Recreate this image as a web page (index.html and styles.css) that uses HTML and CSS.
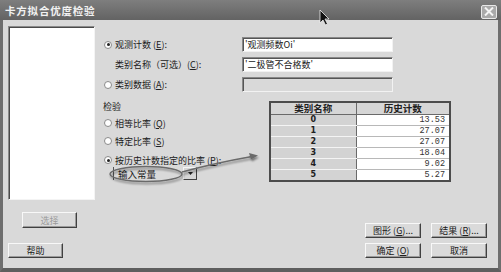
FILE: index.html
```html
<!DOCTYPE html>
<html lang="zh">
<head>
<meta charset="utf-8">
<title>卡方拟合优度检验</title>
<link rel="stylesheet" href="styles.css">
</head>
<body>
<div class="window">
  <div class="titlebar">
    <span class="title">卡方拟合优度检验</span>
    <span class="close"><svg width="10" height="9" viewBox="0 0 10 9"><path d="M1 0.5 L9 8.5 M9 0.5 L1 8.5" stroke="#f4f4f4" stroke-width="2"/></svg></span>
  </div>
  <div class="body">
    <div class="left">
      <div class="listbox"></div>
      <button class="btn btn-select" disabled>选择</button>
    </div>
    <div class="form">
      <div class="row">
        <div class="field-label"><span class="radio checked"></span>观测计数 (<u>E</u>):</div>
        <div class="input">'观测频数Oi'</div>
      </div>
      <div class="row">
        <div class="field-label indent">类别名称（可选）(<u>C</u>):</div>
        <div class="input">'二极管不合格数'</div>
      </div>
      <div class="row">
        <div class="field-label"><span class="radio"></span>类别数据 (<u>A</u>):</div>
        <div class="input disabled"></div>
      </div>
      <div class="test-section">
        <div class="test-left">
          <div class="group-title">检验</div>
          <div class="opt opt1"><span class="radio"></span>相等比率 (<u>Q</u>)</div>
          <div class="opt opt2"><span class="radio"></span>特定比率 (<u>S</u>)</div>
          <div class="opt opt3"><span class="radio checked"></span>按历史计数指定的比率 (<u>P</u>):</div>
          <div class="combo">
            <span class="combo-text">输入常量</span>
            <span class="combo-btn"><svg width="5" height="3" viewBox="0 0 5 3"><path d="M0 0 H5 L2.5 3 Z" fill="#222"/></svg></span>
          </div>
        </div>
        <table class="grid">
          <colgroup><col class="c1"><col class="c2"></colgroup>
          <thead>
            <tr><th>类别名称</th><th>历史计数</th></tr>
          </thead>
          <tbody>
            <tr><td class="cat">0</td><td class="num">13.53</td></tr>
            <tr><td class="cat">1</td><td class="num">27.07</td></tr>
            <tr><td class="cat">2</td><td class="num">27.07</td></tr>
            <tr><td class="cat">3</td><td class="num">18.04</td></tr>
            <tr><td class="cat">4</td><td class="num">9.02</td></tr>
            <tr><td class="cat">5</td><td class="num">5.27</td></tr>
          </tbody>
        </table>
      </div>
      <div class="btn-row">
        <button class="btn">图形 (<u>G</u>)...</button>
        <button class="btn">结果 (<u>R</u>)...</button>
      </div>
    </div>
  </div>
  <div class="footer">
    <button class="btn">帮助</button>
    <div class="footer-right">
      <button class="btn">确定 (<u>O</u>)</button>
      <button class="btn">取消</button>
    </div>
  </div>
  <svg class="overlay" width="501" height="272" viewBox="0 0 501 272">
    <defs>
      <filter id="sh" x="-20%" y="-50%" width="140%" height="200%">
        <feGaussianBlur in="SourceAlpha" stdDeviation="1.2"/>
        <feOffset dx="1" dy="1.5" result="b"/>
        <feComponentTransfer><feFuncA type="linear" slope="0.45"/></feComponentTransfer>
        <feMerge><feMergeNode/><feMergeNode in="SourceGraphic"/></feMerge>
      </filter>
    </defs>
    <g filter="url(#sh)" fill="none" stroke="#6a6a6a" stroke-width="1.4">
      <ellipse cx="146" cy="174" rx="36" ry="7.5"/>
      <path d="M182 172 Q215 163 252 156.5"/>
    </g>
    <path d="M258 155.5 L249 153 L251 159.5 Z" fill="#6a6a6a" filter="url(#sh)"/>
    <path d="M320 10 L320 23 L323 20 L325.5 25 L327.5 24 L325 19 L329 19 Z" fill="#111" stroke="#eee" stroke-width="0.8"/>
  </svg>
</div>
</body>
</html>
```

FILE: styles.css
```css
* { box-sizing: border-box; }
html, body { margin: 0; padding: 0; }
body {
  width: 501px;
  height: 272px;
  overflow: hidden;
  background: #d9d9d9;
  font-family: "Noto Sans CJK SC", "Noto Sans", sans-serif;
  font-size: 9px;
  color: #202020;
}
u { text-decoration: underline; }

.window {
  position: relative;
  width: 501px;
  height: 272px;
  display: flex;
  flex-direction: column;
  background: #d9d9d9;
  border-left: 3px solid #6e6e6e;
  border-right: 3px solid #6e6e6e;
  border-bottom: 4px solid #5e5e5e;
}

.titlebar {
  flex: none;
  height: 20px;
  margin: 0 -3px;
  padding: 0 4px 0 5px;
  display: flex;
  align-items: center;
  justify-content: space-between;
  background: linear-gradient(#7e7e7e, #636363);
}
.title {
  color: #f2f2f2;
  font-size: 10.5px;
  font-weight: bold;
  letter-spacing: 0.8px;
}
.close {
  width: 16px;
  height: 14px;
  display: flex;
  align-items: center;
  justify-content: center;
  background: #a9a9a9;
  border: 1px solid #e8e8e8;
  border-radius: 2px;
  margin-top: 3px;
}

.body {
  flex: none;
  height: 223px;
  display: flex;
  padding: 6px 11px 0 5px;
}
.left {
  width: 87px;
  flex: none;
  display: flex;
  flex-direction: column;
}
.listbox {
  height: 174px;
  background: #fff;
  border: 1px solid #8a8a8a;
  border-right-color: #f4f4f4;
  border-bottom-color: #f4f4f4;
  box-shadow: inset 1px 1px 0 #4a4a4a;
}

.btn {
  height: 15px;
  width: 56px;
  padding: 0;
  font-family: inherit;
  font-size: 9px;
  color: #202020;
  background: #dadada;
  border: 1px solid;
  border-color: #f8f8f8 #404040 #404040 #f8f8f8;
  box-shadow: inset -1px -1px 0 #9a9a9a;
  display: flex;
  align-items: center;
  justify-content: center;
  line-height: 1;
}
.btn:disabled { color: #9a9a9a; }
.btn-select {
  margin: 12px 0 0 14px;
  width: 55px;
  height: 16px;
}

.form {
  flex: 1;
  margin-left: 8px;
  padding-top: 11px;
  display: flex;
  flex-direction: column;
}
.row {
  height: 15px;
  display: flex;
  align-items: center;
  margin-bottom: 5px;
}
.field-label {
  width: 139px;
  flex: none;
  display: flex;
  align-items: center;
  white-space: nowrap;
}
.field-label.indent { padding-left: 12px; }
.radio {
  width: 8px;
  height: 8px;
  flex: none;
  border-radius: 50%;
  background: #fff;
  border: 1px solid #8a8a8a;
  margin: 0 3px 0 1px;
  position: relative;
}
.radio.checked::after {
  content: "";
  position: absolute;
  left: 1.5px;
  top: 1.5px;
  width: 3px;
  height: 3px;
  border-radius: 50%;
  background: #222;
}
.input {
  width: 151px;
  height: 15px;
  background: #fff;
  border: 1px solid #888;
  border-right-color: #f2f2f2;
  border-bottom-color: #f2f2f2;
  box-shadow: inset 1px 1px 0 #555;
  padding: 0 2px;
  display: flex;
  align-items: center;
  white-space: nowrap;
  font-size: 9px;
}
.input.disabled { background: #d9d9d9; }

.test-section {
  margin-top: 4px;
  display: flex;
  align-items: flex-start;
}
.test-left {
  width: 166px;
  flex: none;
  display: flex;
  flex-direction: column;
}
.group-title { height: 12px; line-height: 12px; }
.opt {
  height: 12px;
  display: flex;
  align-items: center;
  white-space: nowrap;
}
.opt1 { margin-top: 4px; }
.opt2 { margin-top: 6px; }
.opt3 { margin-top: 7px; }
.combo {
  margin: 1px 0 0 10px;
  height: 13px;
  display: flex;
  align-items: center;
}
.combo-text {
  width: 68px;
  height: 13px;
  padding-left: 4px;
  display: flex;
  align-items: center;
  font-size: 9.5px;
  border-left: 1px solid #555;
}
.combo-btn {
  margin-left: 2px;
  width: 14px;
  height: 13px;
  display: flex;
  align-items: center;
  justify-content: center;
  border: 1px solid;
  border-color: #f4f4f4 #404040 #404040 #f4f4f4;
  background: #d6d6d6;
}

.grid {
  width: 180px;
  table-layout: fixed;
  border-collapse: collapse;
  border: 2px solid #4c4c4c;
  font-size: 9px;
}
.grid col.c1 { width: 86px; }
.grid col.c2 { width: 94px; }
.grid th {
  height: 12px;
  padding: 0;
  background: #d6d6d6;
  font-weight: bold;
  font-size: 9.5px;
  text-align: center;
  border-bottom: 1px solid #6a6a6a;
  border-right: 1px solid #6a6a6a;
  line-height: 11px;
}
.grid td {
  height: 11px;
  padding: 0;
  line-height: 10px;
}
.grid td.cat {
  background: #d3d3d3;
  text-align: center;
  font-weight: bold;
  font-family: "DejaVu Sans", sans-serif;
  font-size: 8px;
  border-right: 1px solid #6a6a6a;
  border-bottom: 1px solid #f4f4f4;
}
.grid td.num {
  background: #fff;
  text-align: right;
  padding-right: 4px;
  font-family: "Liberation Mono", monospace;
  font-size: 8.5px;
  color: #333;
  border-bottom: 1px solid #b8b8b8;
}

.btn-row {
  margin-top: 41px;
  display: flex;
  justify-content: flex-end;
  gap: 10px;
}

.footer {
  flex: none;
  height: 15px;
  display: flex;
  justify-content: space-between;
  padding: 0 11px 0 5px;
}
.footer .btn { width: 55px; }
.footer-right { display: flex; gap: 10px; }
.footer-right .btn { width: 56px; }

.overlay {
  position: absolute;
  left: -3px;
  top: 0;
  pointer-events: none;
}
```
